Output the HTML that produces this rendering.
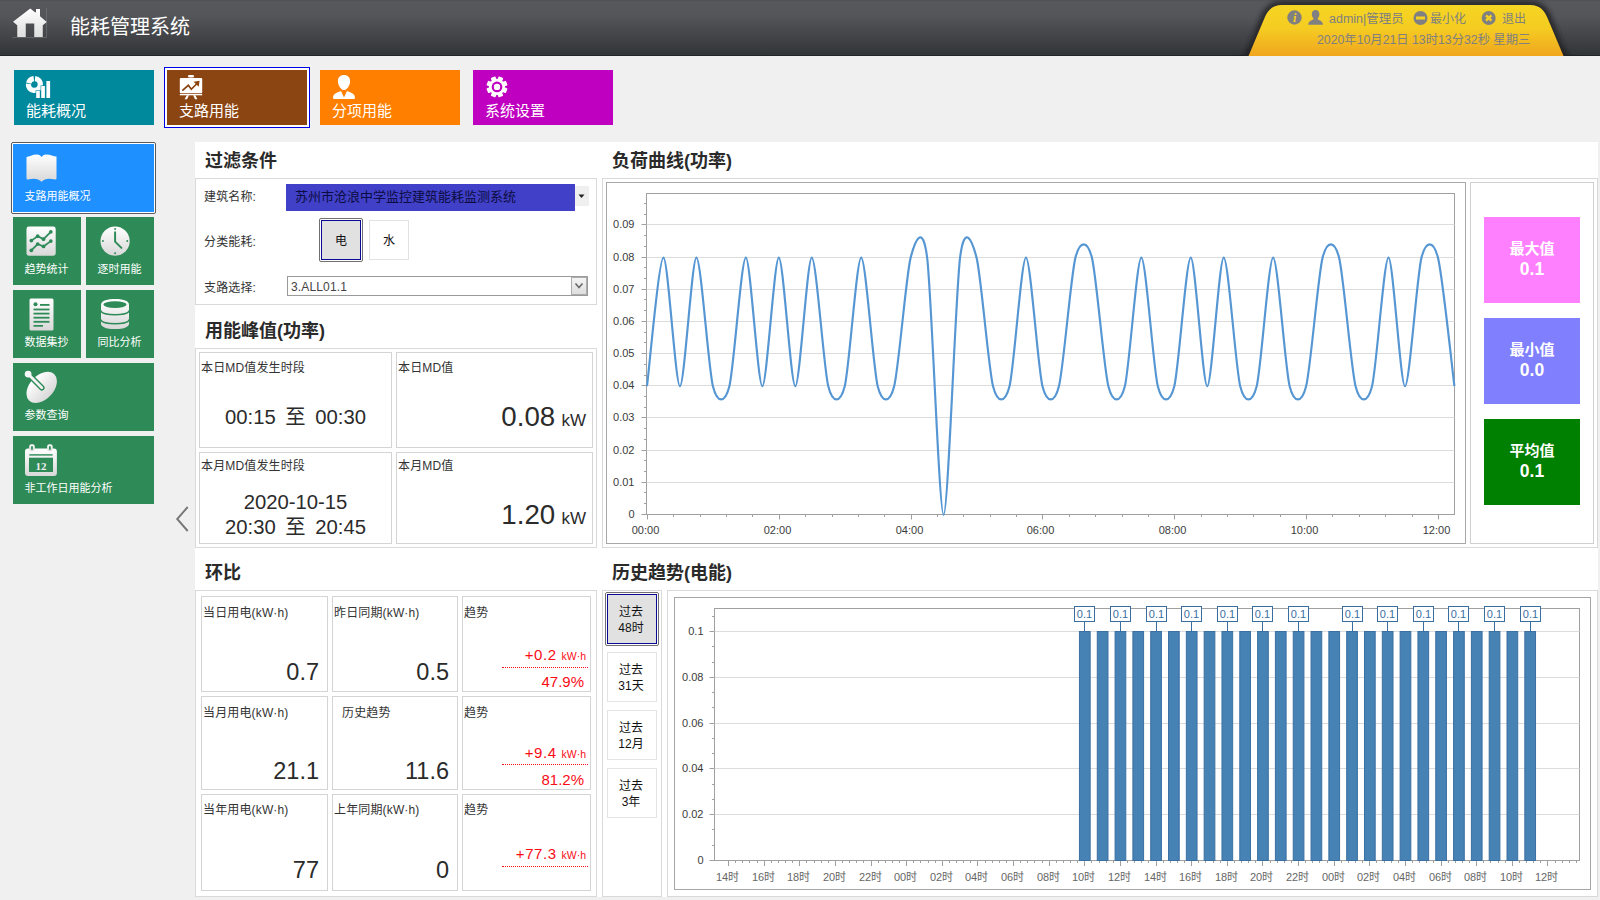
<!DOCTYPE html><html lang="zh-CN"><head><meta charset="utf-8"><title>能耗管理系统</title><style>
*{box-sizing:border-box;margin:0;padding:0}
html,body{width:1600px;height:900px;overflow:hidden;background:#f0f0f0}
body{position:relative;font-family:"Liberation Sans","Noto Sans CJK SC",sans-serif;font-size:12px;color:#222}
.a{position:absolute}
.t{position:absolute;white-space:nowrap;line-height:1}
#hdr{left:0;top:0;width:1600px;height:56px;background:linear-gradient(#505155 0,#57585c 2px,#545559 30%,#45464a 62%,#323537 100%);border-bottom:1px solid #222527}
.tile{position:absolute;color:#fff}
.tile .t{font-size:15px;color:#fff}
.stile .t{font-size:11px;color:#fff}
.h2{position:absolute;font-size:18px;font-weight:700;color:#2a2a2a;white-space:nowrap;line-height:1}
.box{position:absolute;border:1px solid #d9d9d9;background:#fff}
.cell{position:absolute;border:1px solid #d4d4d4;background:#fff}
.lbl{position:absolute;white-space:nowrap;line-height:1;font-size:12px;color:#333;letter-spacing:0.15px}
.big{position:absolute;white-space:nowrap;line-height:1;color:#2b2b2b}
.red{color:#fa0c16}
</style></head><body>
<div id="hdr" class="a"></div>
<svg class="a" style="left:0;top:0" width="60" height="50" viewBox="0 0 60 50">
<defs><linearGradient id="hg" x1="0" y1="0" x2="0" y2="1"><stop offset="0" stop-color="#ffffff"/><stop offset="1" stop-color="#dedede"/></linearGradient></defs>
<path d="M46.500 8 L46.500 37.500 L12.500 37.500" stroke="#7a7b80" stroke-width="1" fill="none" opacity="0.550"/>
<path d="M30.250 8.400 L35.300 12.500 L36 12 L36 9 L40 9 L40 16.200 L46.750 22 L42.750 25.250 L42.750 37 L34.250 37 L34.250 23.500 L25.750 23.500 L25.750 37 L17.250 37 L17.250 25.250 L13 21.750 Z" fill="url(#hg)"/></svg>
<div class="t" style="left:70px;top:17px;font-size:20px;color:#fff;font-weight:400">能耗管理系统</div>
<svg class="a" style="left:1230px;top:0" width="360" height="56" viewBox="1230 0 360 56">
<defs><linearGradient id="yg" x1="0" y1="0" x2="0" y2="1"><stop offset="0" stop-color="#f5d523"/><stop offset="0.45" stop-color="#f5cc22"/><stop offset="1" stop-color="#f0a61e"/></linearGradient>
<linearGradient id="sh" x1="0" y1="0" x2="0" y2="1"><stop offset="0" stop-color="#4a4b4f"/><stop offset="1" stop-color="#2e2f32"/></linearGradient></defs>
<filter id="bl" x="-5%" y="-20%" width="110%" height="140%"><feGaussianBlur stdDeviation="2.200"/></filter>
<path d="M1248.500 58 L1264.500 18 C1267 12 1271 5 1282 5 L1530 5 C1541 5 1545 12 1547.500 18 L1563.500 58 Z" fill="#222326" stroke="#222326" stroke-width="9" stroke-linejoin="round" opacity="0.800" filter="url(#bl)"/>
<path d="M1236 60 Q1246 58 1251 48 L1258 48 L1258 60 Z M1576 60 Q1566 58 1561 48 L1554 48 L1554 60 Z" fill="#222326" opacity="0.700" filter="url(#bl)"/>
<path d="M1248.500 56 L1264.500 18 C1267 12 1271 5 1282 5 L1530 5 C1541 5 1545 12 1547.500 18 L1563.500 56 Z" fill="url(#yg)"/>
<g fill="#808080">
<circle cx="1294.5" cy="17.5" r="7.2"/>
<circle cx="1420.5" cy="18" r="7"/>
<circle cx="1488.7" cy="18" r="7"/>
<path d="M1315.6 10 c2.6 0 3.8 2 3.8 4.2 c0 1.8 -0.8 3.2 -1.6 4 l0 1.4 c2 .8 5 1.8 5.2 5.2 l-14.8 0 c.2 -3.4 3.2 -4.4 5.2 -5.2 l0 -1.4 c-.8 -.8 -1.6 -2.2 -1.6 -4 c0 -2.2 1.2 -4.2 3.8 -4.2z"/>
</g>
<text x="1294.7" y="22" font-size="12" font-weight="700" font-style="italic" font-family="Liberation Serif,serif" fill="#f5d020" text-anchor="middle">i</text>
<rect x="1416" y="16.5" width="9" height="3" fill="#f5d020"/>
<path d="M1486 15.3 l5.4 5.4 M1491.4 15.3 l-5.4 5.4" stroke="#f5d020" stroke-width="2.4"/>
</svg>
<div class="t" style="left:1329px;top:13px;font-size:12.5px;color:#808080">admin|管理员</div>
<div class="t" style="left:1430px;top:13px;font-size:12px;color:#808080">最小化</div>
<div class="t" style="left:1502px;top:13px;font-size:12px;color:#808080">退出</div>
<div class="t" style="left:1317px;top:34px;font-size:12.3px;color:#808080">2020年10月21日 13时13分32秒 星期三</div>
<div class="tile" style="left:14px;top:70px;width:140px;height:55px;background:#00889c"><svg class="a" style="left:0;top:0" width="60" height="34" viewBox="0 0 60 34"><g fill="#fff"><path d="M21.30 5.95 A8.6 8.6 0 1 1 11.85 13.60 L17.12 14.16 A3.3 3.3 0 1 0 20.74 11.22 Z"/><path d="M12.06 12.42 A8.6 8.6 0 0 1 19.50 5.95 L20.06 11.22 A3.3 3.3 0 0 0 17.20 13.70 Z"/></g><g fill="#fff" stroke="#00889c" stroke-width="1.2" paint-order="stroke"><rect x="22.2" y="21" width="3.6" height="7"/><rect x="27.2" y="16" width="3.700" height="12"/><rect x="32.400" y="11" width="3.700" height="17"/></g></svg><div class="t" style="left:12px;top:33px">能耗概况</div></div>
<div class="a" style="left:164px;top:67px;width:146px;height:61px;border:1px solid #0000e6;background:#fff"></div>
<div class="tile" style="left:167px;top:70px;width:140px;height:55px;background:#8b4513"><svg class="a" style="left:0;top:0" width="60" height="34" viewBox="0 0 60 34"><g fill="#fff">
<rect x="21" y="5" width="6" height="2.400" rx="1.200"/><rect x="12.800" y="8" width="22.400" height="15.300" rx="1"/><rect x="12.800" y="24" width="22.400" height="1.300"/>
<path d="M19.800 25.300 L22 25.300 L20 29.200 L17.600 29.200 Z M26.200 25.300 L28.400 25.300 L30.400 29.200 L28 29.200 Z"/></g>
<path d="M15.300 20.700 L21.300 15.300 L24.300 19.300 L30.500 13" stroke="#8b4513" stroke-width="1.700" fill="none"/><path d="M26.600 11.700 L32.600 10.800 L31.700 16.800 Z" fill="#8b4513"/></svg><div class="t" style="left:12px;top:33px">支路用能</div></div>
<div class="tile" style="left:320px;top:70px;width:140px;height:55px;background:#ff8000"><svg class="a" style="left:-4px;top:0" width="60" height="34" viewBox="0 0 60 34"><g fill="#fff">
<path d="M28 5 C31.800 5 34.100 7.500 34.100 11 C34.100 13 33.600 14.200 33.100 15.200 C32.400 17.800 30.200 20 28 20 C25.800 20 23.600 17.800 22.900 15.200 C22.400 14.200 21.900 13 21.900 11 C21.900 7.500 24.200 5 28 5 Z"/>
<path d="M25 21 L28 27.400 L31 21 C34 22.400 39 23.500 39 27.500 Q39 29 37.500 29 L18.500 29 Q17 29 17 27.500 C17 23.500 22 22.400 25 21 Z"/></g></svg><div class="t" style="left:12px;top:33px">分项用能</div></div>
<div class="tile" style="left:473px;top:70px;width:140px;height:55px;background:#c000c0"><svg class="a" style="left:0;top:0" width="60" height="34" viewBox="0 0 60 34"><g transform="translate(24 16.900)"><g fill="#fff"><rect x="-2.500" y="-10.500" width="5" height="6" rx="0.800" transform="rotate(22.5)"/><rect x="-2.500" y="-10.500" width="5" height="6" rx="0.800" transform="rotate(67.5)"/><rect x="-2.500" y="-10.500" width="5" height="6" rx="0.800" transform="rotate(112.5)"/><rect x="-2.500" y="-10.500" width="5" height="6" rx="0.800" transform="rotate(157.5)"/><rect x="-2.500" y="-10.500" width="5" height="6" rx="0.800" transform="rotate(202.5)"/><rect x="-2.500" y="-10.500" width="5" height="6" rx="0.800" transform="rotate(247.5)"/><rect x="-2.500" y="-10.500" width="5" height="6" rx="0.800" transform="rotate(292.5)"/><rect x="-2.500" y="-10.500" width="5" height="6" rx="0.800" transform="rotate(337.5)"/><circle r="8"/></g><circle r="5.300" fill="#c000c0"/><circle r="3.200" fill="#fff"/></g></svg><div class="t" style="left:12px;top:33px">系统设置</div></div>
<div class="a" style="left:11px;top:142px;width:145px;height:72px;border:1px solid #5a5a5a;border-radius:2px;background:#fff"></div>
<div class="tile stile" style="left:13px;top:144px;width:141px;height:68px;background:#1e90ff"><svg class="a" style="left:12.600px;top:9.800px" width="31" height="28.500" viewBox="0 0 31 28.500"><defs><linearGradient id="wg" x1="0" y1="0" x2="0" y2="1"><stop offset="0" stop-color="#ffffff"/><stop offset="1" stop-color="#d8d8d8"/></linearGradient></defs><path d="M0.500 3 C3 2.700 7 0.200 11 0.400 C13 0.500 15 1.700 15.600 3 C16.200 1.700 18 0.500 20 0.400 C24 0.200 28 2.700 30.500 2.500 L30.500 24.200 Q30.500 25.700 29 25.500 C26 24.700 22 24.200 19.500 25.200 C17.500 26 16.200 27 15.600 28 C15 27 13.500 26 11.500 25.200 C9 24.200 5 24.700 2 25.500 Q0.500 25.700 0.500 24.200 Z" fill="url(#wg)"/></svg><div class="t" style="left:11.5px;top:47px">支路用能概况</div></div>
<div class="tile stile" style="left:13px;top:217px;width:68px;height:68px;background:#2e8b57"><svg class="a" style="left:12.900px;top:8.800px" width="30.200" height="30.200" viewBox="0 0 31 31"><rect x="0.500" y="0.500" width="30" height="30" rx="2.500" fill="url(#wg)"/>
<g stroke="#2e8b57" stroke-width="1.800" fill="none"><path d="M5.500 15 L12 10.500 L18 13.500 L25.500 6"/><path d="M5.500 25 L12 18.500 L18 21 L25.500 15.500"/></g>
<g fill="#2e8b57"><circle cx="5.500" cy="15" r="1.900"/><circle cx="12" cy="10.500" r="1.900"/><circle cx="18" cy="13.500" r="1.900"/><circle cx="25.500" cy="6" r="1.900"/><circle cx="5.500" cy="25" r="1.900"/><circle cx="12" cy="18.500" r="1.900"/><circle cx="18" cy="21" r="1.900"/><circle cx="25.500" cy="15.500" r="1.900"/></g></svg><div class="t" style="left:11.5px;top:47px">趋势统计</div></div>
<div class="tile stile" style="left:86px;top:217px;width:68px;height:68px;background:#2e8b57"><svg class="a" style="left:13.600px;top:8.700px" width="30.200" height="30.200" viewBox="0 0 31 31"><circle cx="15.500" cy="15.500" r="15" fill="url(#wg)"/>
<path d="M15.500 6.500 L15.500 16 L22 22.500" stroke="#2e8b57" stroke-width="2" fill="none" stroke-linecap="round"/>
<g fill="#2e8b57"><circle cx="15.500" cy="3" r="1"/><circle cx="15.500" cy="28" r="1"/><circle cx="3" cy="15.500" r="1"/><circle cx="28" cy="15.500" r="1"/></g></svg><div class="t" style="left:11.5px;top:47px">逐时用能</div></div>
<div class="tile stile" style="left:13px;top:290px;width:68px;height:68px;background:#2e8b57"><svg class="a" style="left:16.400px;top:7.600px" width="25" height="33" viewBox="0 0 25 33"><path d="M2 0.500 L23 0.500 Q24.500 0.500 24.500 2 L24.500 31 Q24.500 32.500 23 32.500 L2 32.500 Q0.500 32.500 0.500 31 L0.500 2 Q0.500 0.500 2 0.500Z" fill="url(#wg)"/>
<g fill="#2e8b57"><circle cx="6.500" cy="6.300" r="2"/><rect x="11" y="6" width="9.500" height="1.800"/><rect x="4.500" y="10.600" width="16" height="1.800"/><rect x="4.500" y="14.700" width="16" height="1.800"/><rect x="4.500" y="18.800" width="16" height="1.800"/><rect x="4.500" y="22.900" width="16" height="1.800"/><rect x="4.500" y="27" width="9.500" height="1.700"/></g></svg><div class="t" style="left:11.5px;top:47px">数据集抄</div></div>
<div class="tile stile" style="left:86px;top:290px;width:68px;height:68px;background:#2e8b57"><svg class="a" style="left:14.800px;top:8.800px" width="28" height="30.500" viewBox="0 0 28 30.500"><g fill="url(#wg)">
<path d="M0 5.500 C0 -1.700 28 -1.700 28 5.500 L28 24.700 C28 32 0 32 0 24.700 Z"/></g>
<g stroke="#2e8b57" stroke-width="1.500" fill="none"><path d="M0 11.500 C0 17.300 28 17.300 28 11.500"/><path d="M0 20.500 C0 26.300 28 26.300 28 20.500"/></g>
<ellipse cx="14" cy="5.600" rx="11.600" ry="3.400" fill="#2e8b57"/></svg><div class="t" style="left:11.5px;top:47px">同比分析</div></div>
<div class="tile stile" style="left:13px;top:363px;width:141px;height:68px;background:#2e8b57"><svg class="a" style="left:11px;top:7px" width="36" height="36" viewBox="0 0 36 36">
<ellipse cx="17.700" cy="17.400" rx="18.200" ry="12" transform="rotate(-47 17.700 17.400)" fill="url(#wg)"/>
<path d="M4.100 4.100 L17.800 17.800" stroke="#2e8b57" stroke-width="5.600" stroke-linecap="round"/>
<path d="M4.100 4.100 L17.800 17.800" stroke="#f3f3f3" stroke-width="2.800" stroke-linecap="round"/>
<circle cx="4.100" cy="4.100" r="3.400" fill="#f8f8f8"/></svg><div class="t" style="left:11.5px;top:47px">参数查询</div></div>
<div class="tile stile" style="left:13px;top:436px;width:141px;height:68px;background:#2e8b57"><svg class="a" style="left:0;top:0" width="60" height="50" viewBox="0 0 60 50"><g fill="url(#wg)">
<rect x="12" y="12.400" width="31.900" height="27.600" rx="3"/><rect x="16.200" y="8.200" width="5.600" height="7" rx="2.400"/><rect x="34.100" y="8.200" width="5.600" height="7" rx="2.400"/></g>
<g fill="#2e8b57"><rect x="16.300" y="18.200" width="23.300" height="1.400"/><rect x="16" y="21.700" width="24" height="14.300"/><rect x="18.100" y="10" width="1.800" height="3.800" rx="0.900"/><rect x="36" y="10" width="1.800" height="3.800" rx="0.900"/></g>
<text x="28" y="33.600" font-size="11" font-weight="700" font-family="Liberation Serif,serif" fill="#eee" text-anchor="middle">12</text></svg><div class="t" style="left:11.5px;top:47px">非工作日用能分析</div></div>
<svg class="a" style="left:174px;top:505.300px" width="16" height="28" viewBox="0 0 16 28"><path d="M13.700 2 L3.200 14 L13.700 26" stroke="#777" stroke-width="1.900" fill="none"/></svg>
<div class="a" style="left:195px;top:142px;width:1403px;height:755px;background:#fff"></div>
<div class="h2" style="left:205px;top:151.6px">过滤条件</div>
<div class="h2" style="left:205px;top:321.6px">用能峰值(功率)</div>
<div class="h2" style="left:205px;top:563.6px">环比</div>
<div class="h2" style="left:612px;top:151.6px">负荷曲线(功率)</div>
<div class="h2" style="left:612px;top:563.6px">历史趋势(电能)</div>
<div class="box" style="left:195px;top:178px;width:402px;height:127px"></div>
<div class="lbl" style="left:204px;top:191px">建筑名称:</div>
<div class="lbl" style="left:204px;top:236px">分类能耗:</div>
<div class="lbl" style="left:204px;top:282px">支路选择:</div>
<div class="a" style="left:286px;top:184px;width:289px;height:27px;background:#4040c8"></div>
<div class="lbl" style="left:295px;top:190px;color:#0c0c40;font-size:13px;letter-spacing:0">苏州市沧浪中学监控建筑能耗监测系统</div>
<div class="a" style="left:575px;top:186px;width:14px;height:20px;background:#efefef"></div>
<svg class="a" style="left:578px;top:194px" width="8" height="5"><path d="M0.500 0.500 L6.500 0.500 L3.500 4 Z" fill="#222"/></svg>
<div class="a" style="left:319px;top:218px;width:44px;height:44px;border:1px solid #707070;border-radius:2px;background:#fff"></div>
<div class="a" style="left:321px;top:220px;width:40px;height:40px;border:1px solid #0a0a96;background:#e1e1e1"></div>
<div class="lbl" style="left:335px;top:235px;color:#111">电</div>
<div class="a" style="left:369px;top:220px;width:40px;height:40px;border:1px solid #e2e2e2;background:#fff"></div>
<div class="lbl" style="left:383px;top:235px;color:#111">水</div>
<div class="a" style="left:287px;top:276px;width:301px;height:20px;border:1px solid #9a9a9a;background:#fff"></div>
<div class="lbl" style="left:291px;top:281px;color:#444">3.ALL01.1</div>
<div class="a" style="left:571px;top:277px;width:16px;height:18px;border:1px solid #adadad;background:linear-gradient(#f4f4f4,#dedede)"></div>
<svg class="a" style="left:574px;top:282px" width="10" height="8"><path d="M1.500 1.500 L5 5.500 L8.500 1.500" stroke="#6a6a6a" stroke-width="1.600" fill="none"/></svg>
<div class="box" style="left:195px;top:348px;width:402px;height:200px"></div>
<div class="cell" style="left:199px;top:352px;width:193px;height:96px"></div>
<div class="cell" style="left:396px;top:352px;width:197px;height:96px"></div>
<div class="cell" style="left:199px;top:452px;width:193px;height:92px"></div>
<div class="cell" style="left:396px;top:452px;width:197px;height:92px"></div>
<div class="lbl" style="left:201px;top:362px">本日MD值发生时段</div>
<div class="lbl" style="left:398px;top:362px">本日MD值</div>
<div class="lbl" style="left:201px;top:460px">本月MD值发生时段</div>
<div class="lbl" style="left:398px;top:460px">本月MD值</div>
<div class="big" style="left:199px;width:193px;text-align:center;top:407px;font-size:20.3px;word-spacing:4px">00:15 至 00:30</div>
<div class="big" style="left:199px;width:193px;text-align:center;top:492px;font-size:20.3px">2020-10-15</div>
<div class="big" style="left:199px;width:193px;text-align:center;top:517px;font-size:20.3px;word-spacing:4px">20:30 至 20:45</div>
<div class="big" style="right:1014px;top:403px;font-size:27.700px">0.08<span style="font-size:17px;margin-left:1.5px"> kW</span></div>
<div class="big" style="right:1014px;top:501px;font-size:27.700px">1.20<span style="font-size:17px;margin-left:1.5px"> kW</span></div>
<div class="box" style="left:195px;top:590px;width:402px;height:307px"></div>
<div class="cell" style="left:201px;top:596px;width:127px;height:96px"></div>
<div class="lbl" style="left:203px;top:607px">当日用电(kW·h)</div>
<div class="big" style="right:1281px;top:661px;font-size:23.5px">0.7</div>
<div class="cell" style="left:332px;top:596px;width:126px;height:96px"></div>
<div class="lbl" style="left:334px;top:607px">昨日同期(kW·h)</div>
<div class="big" style="right:1151px;top:661px;font-size:23.5px">0.5</div>
<div class="cell" style="left:462px;top:596px;width:129px;height:96px"></div>
<div class="lbl" style="left:464px;top:607px">趋势</div>
<div class="big red" style="right:1014px;top:647px;font-size:15px;letter-spacing:0.6px">+0.2 <span style="font-size:10.5px;letter-spacing:0">kW·h</span></div>
<div class="a" style="left:502px;top:667px;width:86px;border-top:1px dotted #fa0c16"></div>
<div class="big red" style="right:1016px;top:674px;font-size:15px">47.9%</div>
<div class="cell" style="left:201px;top:696px;width:127px;height:94px"></div>
<div class="lbl" style="left:203px;top:707px">当月用电(kW·h)</div>
<div class="big" style="right:1281px;top:760px;font-size:23.5px">21.1</div>
<div class="cell" style="left:332px;top:696px;width:126px;height:94px"></div>
<div class="lbl" style="left:342px;top:707px">历史趋势</div>
<div class="big" style="right:1151px;top:760px;font-size:23.5px">11.6</div>
<div class="cell" style="left:462px;top:696px;width:129px;height:94px"></div>
<div class="lbl" style="left:464px;top:707px">趋势</div>
<div class="big red" style="right:1014px;top:745px;font-size:15px;letter-spacing:0.6px">+9.4 <span style="font-size:10.5px;letter-spacing:0">kW·h</span></div>
<div class="a" style="left:502px;top:764px;width:86px;border-top:1px dotted #fa0c16"></div>
<div class="big red" style="right:1016px;top:772px;font-size:15px">81.2%</div>
<div class="cell" style="left:201px;top:794px;width:127px;height:97px"></div>
<div class="lbl" style="left:203px;top:804px">当年用电(kW·h)</div>
<div class="big" style="right:1281px;top:859px;font-size:23.5px">77</div>
<div class="cell" style="left:332px;top:794px;width:126px;height:97px"></div>
<div class="lbl" style="left:334px;top:804px">上年同期(kW·h)</div>
<div class="big" style="right:1151px;top:859px;font-size:23.5px">0</div>
<div class="cell" style="left:462px;top:794px;width:129px;height:97px"></div>
<div class="lbl" style="left:464px;top:804px">趋势</div>
<div class="big red" style="right:1014px;top:846px;font-size:15px;letter-spacing:0.6px">+77.3 <span style="font-size:10.5px;letter-spacing:0">kW·h</span></div>
<div class="a" style="left:502px;top:866px;width:86px;border-top:1px dotted #fa0c16"></div>
<div class="box" style="left:602px;top:178px;width:996px;height:370px"></div>
<div class="a" style="left:606px;top:182px;width:860px;height:362px;border:1px solid #a8a8a8;background:#fff"></div>
<div class="a" style="left:1470px;top:182px;width:124px;height:362px;border:1px solid #d0d0d0;background:#fff"></div>
<div class="a" style="left:1484px;top:217px;width:96px;height:86px;background:#ff80ff"></div>
<div class="t" style="left:1484px;width:96px;text-align:center;top:241px;font-size:15px;font-weight:700;color:#fff">最大值</div>
<div class="t" style="left:1484px;width:96px;text-align:center;top:261px;font-size:17.5px;font-weight:700;color:#fff">0.1</div>
<div class="a" style="left:1484px;top:318px;width:96px;height:86px;background:#8080ff"></div>
<div class="t" style="left:1484px;width:96px;text-align:center;top:342px;font-size:15px;font-weight:700;color:#fff">最小值</div>
<div class="t" style="left:1484px;width:96px;text-align:center;top:362px;font-size:17.5px;font-weight:700;color:#fff">0.0</div>
<div class="a" style="left:1484px;top:419px;width:96px;height:86px;background:#008000"></div>
<div class="t" style="left:1484px;width:96px;text-align:center;top:443px;font-size:15px;font-weight:700;color:#fff">平均值</div>
<div class="t" style="left:1484px;width:96px;text-align:center;top:463px;font-size:17.5px;font-weight:700;color:#fff">0.1</div>
<svg class="a" style="left:600px;top:178px" width="870" height="372" viewBox="600 178 870 372" font-family="Liberation Sans,sans-serif" font-size="11" fill="#3c3c3c"><rect x="646.5" y="193.5" width="808.0" height="321.0" fill="#fff" stroke="#a0a0a0" stroke-width="1"/><path d="M646.5 482.5 L1454.5 482.5" stroke="#dcdcdc" stroke-width="1"/><path d="M646.5 450.5 L1454.5 450.5" stroke="#dcdcdc" stroke-width="1"/><path d="M646.5 417.5 L1454.5 417.5" stroke="#dcdcdc" stroke-width="1"/><path d="M646.5 385.5 L1454.5 385.5" stroke="#dcdcdc" stroke-width="1"/><path d="M646.5 353.5 L1454.5 353.5" stroke="#dcdcdc" stroke-width="1"/><path d="M646.5 321.5 L1454.5 321.5" stroke="#dcdcdc" stroke-width="1"/><path d="M646.5 289.5 L1454.5 289.5" stroke="#dcdcdc" stroke-width="1"/><path d="M646.5 257.5 L1454.5 257.5" stroke="#dcdcdc" stroke-width="1"/><path d="M646.5 224.5 L1454.5 224.5" stroke="#dcdcdc" stroke-width="1"/><path d="M641.5 514.5 L646.5 514.5" stroke="#a0a0a0"/><text x="634.5" y="518.0" text-anchor="end">0</text><path d="M644.0 503.5 L646.5 503.5" stroke="#a0a0a0"/><path d="M644.0 492.5 L646.5 492.5" stroke="#a0a0a0"/><path d="M641.5 482.5 L646.5 482.5" stroke="#a0a0a0"/><text x="634.5" y="486.0" text-anchor="end">0.01</text><path d="M644.0 471.5 L646.5 471.5" stroke="#a0a0a0"/><path d="M644.0 460.5 L646.5 460.5" stroke="#a0a0a0"/><path d="M641.5 450.5 L646.5 450.5" stroke="#a0a0a0"/><text x="634.5" y="454.0" text-anchor="end">0.02</text><path d="M644.0 439.5 L646.5 439.5" stroke="#a0a0a0"/><path d="M644.0 428.5 L646.5 428.5" stroke="#a0a0a0"/><path d="M641.5 417.5 L646.5 417.5" stroke="#a0a0a0"/><text x="634.5" y="421.0" text-anchor="end">0.03</text><path d="M644.0 407.5 L646.5 407.5" stroke="#a0a0a0"/><path d="M644.0 396.5 L646.5 396.5" stroke="#a0a0a0"/><path d="M641.5 385.5 L646.5 385.5" stroke="#a0a0a0"/><text x="634.5" y="389.0" text-anchor="end">0.04</text><path d="M644.0 375.5 L646.5 375.5" stroke="#a0a0a0"/><path d="M644.0 364.5 L646.5 364.5" stroke="#a0a0a0"/><path d="M641.5 353.5 L646.5 353.5" stroke="#a0a0a0"/><text x="634.5" y="357.0" text-anchor="end">0.05</text><path d="M644.0 342.5 L646.5 342.5" stroke="#a0a0a0"/><path d="M644.0 332.5 L646.5 332.5" stroke="#a0a0a0"/><path d="M641.5 321.5 L646.5 321.5" stroke="#a0a0a0"/><text x="634.5" y="325.0" text-anchor="end">0.06</text><path d="M644.0 310.5 L646.5 310.5" stroke="#a0a0a0"/><path d="M644.0 299.5 L646.5 299.5" stroke="#a0a0a0"/><path d="M641.5 289.5 L646.5 289.5" stroke="#a0a0a0"/><text x="634.5" y="293.0" text-anchor="end">0.07</text><path d="M644.0 278.5 L646.5 278.5" stroke="#a0a0a0"/><path d="M644.0 267.5 L646.5 267.5" stroke="#a0a0a0"/><path d="M641.5 257.5 L646.5 257.5" stroke="#a0a0a0"/><text x="634.5" y="261.0" text-anchor="end">0.08</text><path d="M644.0 246.5 L646.5 246.5" stroke="#a0a0a0"/><path d="M644.0 235.5 L646.5 235.5" stroke="#a0a0a0"/><path d="M641.5 224.5 L646.5 224.5" stroke="#a0a0a0"/><text x="634.5" y="228.0" text-anchor="end">0.09</text><path d="M644.0 214.5 L646.5 214.5" stroke="#a0a0a0"/><path d="M644.0 203.5 L646.5 203.5" stroke="#a0a0a0"/><path d="M647.5 514.5 L647.5 519.5" stroke="#a0a0a0"/><text x="645.5" y="533.5" text-anchor="middle">00:00</text><path d="M673.5 514.5 L673.5 517.0" stroke="#a0a0a0"/><path d="M700.5 514.5 L700.5 517.0" stroke="#a0a0a0"/><path d="M726.5 514.5 L726.5 517.0" stroke="#a0a0a0"/><path d="M752.5 514.5 L752.5 517.0" stroke="#a0a0a0"/><path d="M779.5 514.5 L779.5 519.5" stroke="#a0a0a0"/><text x="777.5" y="533.5" text-anchor="middle">02:00</text><path d="M805.5 514.5 L805.5 517.0" stroke="#a0a0a0"/><path d="M832.5 514.5 L832.5 517.0" stroke="#a0a0a0"/><path d="M858.5 514.5 L858.5 517.0" stroke="#a0a0a0"/><path d="M884.5 514.5 L884.5 517.0" stroke="#a0a0a0"/><path d="M911.5 514.5 L911.5 519.5" stroke="#a0a0a0"/><text x="909.5" y="533.5" text-anchor="middle">04:00</text><path d="M937.5 514.5 L937.5 517.0" stroke="#a0a0a0"/><path d="M963.5 514.5 L963.5 517.0" stroke="#a0a0a0"/><path d="M990.5 514.5 L990.5 517.0" stroke="#a0a0a0"/><path d="M1016.5 514.5 L1016.5 517.0" stroke="#a0a0a0"/><path d="M1042.5 514.5 L1042.5 519.5" stroke="#a0a0a0"/><text x="1040.5" y="533.5" text-anchor="middle">06:00</text><path d="M1069.5 514.5 L1069.5 517.0" stroke="#a0a0a0"/><path d="M1095.5 514.5 L1095.5 517.0" stroke="#a0a0a0"/><path d="M1122.5 514.5 L1122.5 517.0" stroke="#a0a0a0"/><path d="M1148.5 514.5 L1148.5 517.0" stroke="#a0a0a0"/><path d="M1174.5 514.5 L1174.5 519.5" stroke="#a0a0a0"/><text x="1172.5" y="533.5" text-anchor="middle">08:00</text><path d="M1201.5 514.5 L1201.5 517.0" stroke="#a0a0a0"/><path d="M1227.5 514.5 L1227.5 517.0" stroke="#a0a0a0"/><path d="M1253.5 514.5 L1253.5 517.0" stroke="#a0a0a0"/><path d="M1280.5 514.5 L1280.5 517.0" stroke="#a0a0a0"/><path d="M1306.5 514.5 L1306.5 519.5" stroke="#a0a0a0"/><text x="1304.5" y="533.5" text-anchor="middle">10:00</text><path d="M1332.5 514.5 L1332.5 517.0" stroke="#a0a0a0"/><path d="M1359.5 514.5 L1359.5 517.0" stroke="#a0a0a0"/><path d="M1385.5 514.5 L1385.5 517.0" stroke="#a0a0a0"/><path d="M1412.5 514.5 L1412.5 517.0" stroke="#a0a0a0"/><path d="M1438.5 514.5 L1438.5 519.5" stroke="#a0a0a0"/><text x="1436.5" y="533.5" text-anchor="middle">12:00</text><path d="M647.00 386.22 C649.25 368.64 658.97 257.62 663.48 257.62 C667.98 257.62 675.45 386.22 679.96 386.22 C684.46 386.22 691.93 257.62 696.43 257.62 C700.94 257.62 708.41 368.64 712.91 386.22 C717.42 403.80 724.89 403.80 729.39 386.22 C733.89 368.64 741.36 257.62 745.87 257.62 C750.37 257.62 757.84 386.22 762.35 386.22 C766.85 386.22 774.32 257.62 778.82 257.62 C783.33 257.62 790.80 386.22 795.30 386.22 C799.81 386.22 807.28 257.62 811.78 257.62 C816.28 257.62 823.75 368.64 828.26 386.22 C832.76 403.80 840.23 403.80 844.74 386.22 C849.24 368.64 856.71 257.62 861.21 257.62 C865.72 257.62 873.19 368.64 877.69 386.22 C882.20 403.80 889.67 403.80 894.17 386.22 C898.67 368.64 906.14 275.20 910.65 257.62 C915.15 240.04 922.62 222.47 927.13 257.62 C931.63 292.77 939.10 514.82 943.60 514.82 C948.11 514.82 955.58 292.77 960.08 257.62 C964.59 222.47 972.06 240.04 976.56 257.62 C981.06 275.20 988.53 368.64 993.04 386.22 C997.54 403.80 1005.01 403.80 1009.52 386.22 C1014.02 368.64 1021.49 257.62 1025.99 257.62 C1030.50 257.62 1037.97 368.64 1042.47 386.22 C1046.98 403.80 1054.45 403.80 1058.95 386.22 C1063.45 368.64 1070.92 275.20 1075.43 257.62 C1079.93 240.04 1087.40 240.04 1091.91 257.62 C1096.41 275.20 1103.88 368.64 1108.38 386.22 C1112.89 403.80 1120.36 403.80 1124.86 386.22 C1129.37 368.64 1136.84 257.62 1141.34 257.62 C1145.84 257.62 1153.31 368.64 1157.82 386.22 C1162.32 403.80 1169.79 403.80 1174.30 386.22 C1178.80 368.64 1186.27 257.62 1190.77 257.62 C1195.28 257.62 1202.75 386.22 1207.25 386.22 C1211.76 386.22 1219.23 257.62 1223.73 257.62 C1228.23 257.62 1235.70 368.64 1240.21 386.22 C1244.71 403.80 1252.18 403.80 1256.69 386.22 C1261.19 368.64 1268.66 257.62 1273.16 257.62 C1277.67 257.62 1285.14 368.64 1289.64 386.22 C1294.15 403.80 1301.62 403.80 1306.12 386.22 C1310.62 368.64 1318.09 275.20 1322.60 257.62 C1327.10 240.04 1334.57 240.04 1339.08 257.62 C1343.58 275.20 1351.05 368.64 1355.55 386.22 C1360.06 403.80 1367.53 403.80 1372.03 386.22 C1376.54 368.64 1384.01 257.62 1388.51 257.62 C1393.01 257.62 1400.48 386.22 1404.99 386.22 C1409.49 386.22 1416.96 275.20 1421.47 257.62 C1425.97 240.04 1433.44 240.04 1437.94 257.62 C1442.45 275.20 1452.17 368.64 1454.42 386.22" stroke="#5596d3" stroke-width="2.150" fill="none" stroke-linejoin="round"/></svg>
<div class="box" style="left:602px;top:590px;width:60px;height:307px"></div>
<div class="box" style="left:667px;top:590px;width:931px;height:307px"></div>
<div class="a" style="left:674px;top:597px;width:917px;height:293px;border:1px solid #a6a6a6;background:#fff"></div>
<div class="a" style="left:605px;top:592px;width:54px;height:54px;border:1px solid #707070;border-radius:2px;background:#fff"></div>
<div class="a" style="left:607px;top:594px;width:50px;height:50px;border:1px solid #0a0a96;background:#e1e1e1"></div>
<div class="t" style="left:606px;width:50px;text-align:center;top:606px;font-size:12px;color:#111">过去</div>
<div class="t" style="left:606px;width:50px;text-align:center;top:622px;font-size:12px;color:#111">48时</div>
<div class="a" style="left:607px;top:652px;width:50px;height:50px;border:1px solid #e4e4e4;background:#fff"></div>
<div class="t" style="left:606px;width:50px;text-align:center;top:664px;font-size:12px;color:#111">过去</div>
<div class="t" style="left:606px;width:50px;text-align:center;top:680px;font-size:12px;color:#111">31天</div>
<div class="a" style="left:607px;top:710px;width:50px;height:50px;border:1px solid #e4e4e4;background:#fff"></div>
<div class="t" style="left:606px;width:50px;text-align:center;top:722px;font-size:12px;color:#111">过去</div>
<div class="t" style="left:606px;width:50px;text-align:center;top:738px;font-size:12px;color:#111">12月</div>
<div class="a" style="left:607px;top:768px;width:50px;height:50px;border:1px solid #e4e4e4;background:#fff"></div>
<div class="t" style="left:606px;width:50px;text-align:center;top:780px;font-size:12px;color:#111">过去</div>
<div class="t" style="left:606px;width:50px;text-align:center;top:796px;font-size:12px;color:#111">3年</div>
<svg class="a" style="left:670px;top:594px" width="926" height="300" viewBox="670 594 926 300" font-family="Liberation Sans,Noto Sans CJK SC,sans-serif" font-size="11" fill="#3c3c3c"><rect x="714.5" y="608.5" width="865.0" height="252.0" fill="#fff" stroke="#a0a0a0"/><path d="M709.5 860.5 L714.5 860.5" stroke="#a0a0a0"/><text x="703.5" y="864.0" text-anchor="end">0</text><path d="M712.0 845.5 L714.5 845.5" stroke="#a0a0a0"/><path d="M712.0 829.5 L714.5 829.5" stroke="#a0a0a0"/><path d="M714.5 814.5 L1579.5 814.5" stroke="#dcdcdc"/><path d="M709.5 814.5 L714.5 814.5" stroke="#a0a0a0"/><text x="703.5" y="818.0" text-anchor="end">0.02</text><path d="M712.0 799.5 L714.5 799.5" stroke="#a0a0a0"/><path d="M712.0 784.5 L714.5 784.5" stroke="#a0a0a0"/><path d="M714.5 768.5 L1579.5 768.5" stroke="#dcdcdc"/><path d="M709.5 768.5 L714.5 768.5" stroke="#a0a0a0"/><text x="703.5" y="772.0" text-anchor="end">0.04</text><path d="M712.0 753.5 L714.5 753.5" stroke="#a0a0a0"/><path d="M712.0 738.5 L714.5 738.5" stroke="#a0a0a0"/><path d="M714.5 723.5 L1579.5 723.5" stroke="#dcdcdc"/><path d="M709.5 723.5 L714.5 723.5" stroke="#a0a0a0"/><text x="703.5" y="727.0" text-anchor="end">0.06</text><path d="M712.0 707.5 L714.5 707.5" stroke="#a0a0a0"/><path d="M712.0 692.5 L714.5 692.5" stroke="#a0a0a0"/><path d="M714.5 677.5 L1579.5 677.5" stroke="#dcdcdc"/><path d="M709.5 677.5 L714.5 677.5" stroke="#a0a0a0"/><text x="703.5" y="681.0" text-anchor="end">0.08</text><path d="M712.0 662.5 L714.5 662.5" stroke="#a0a0a0"/><path d="M712.0 646.5 L714.5 646.5" stroke="#a0a0a0"/><path d="M714.5 631.5 L1579.5 631.5" stroke="#dcdcdc"/><path d="M709.5 631.5 L714.5 631.5" stroke="#a0a0a0"/><text x="703.5" y="635.0" text-anchor="end">0.1</text><path d="M712.0 616.5 L714.5 616.5" stroke="#a0a0a0"/><path d="M728.5 860.5 L728.5 866.0" stroke="#a0a0a0"/><text x="727.5" y="880.5" text-anchor="middle" fill="#666">14时</text><path d="M735.5 860.5 L735.5 863.0" stroke="#a0a0a0"/><path d="M742.5 860.5 L742.5 863.0" stroke="#a0a0a0"/><path d="M749.5 860.5 L749.5 863.0" stroke="#a0a0a0"/><path d="M757.5 860.5 L757.5 863.0" stroke="#a0a0a0"/><path d="M764.5 860.5 L764.5 866.0" stroke="#a0a0a0"/><text x="763.5" y="880.5" text-anchor="middle" fill="#666">16时</text><path d="M771.5 860.5 L771.5 863.0" stroke="#a0a0a0"/><path d="M778.5 860.5 L778.5 863.0" stroke="#a0a0a0"/><path d="M785.5 860.5 L785.5 863.0" stroke="#a0a0a0"/><path d="M792.5 860.5 L792.5 863.0" stroke="#a0a0a0"/><path d="M799.5 860.5 L799.5 866.0" stroke="#a0a0a0"/><text x="798.5" y="880.5" text-anchor="middle" fill="#666">18时</text><path d="M806.5 860.5 L806.5 863.0" stroke="#a0a0a0"/><path d="M814.5 860.5 L814.5 863.0" stroke="#a0a0a0"/><path d="M821.5 860.5 L821.5 863.0" stroke="#a0a0a0"/><path d="M828.5 860.5 L828.5 863.0" stroke="#a0a0a0"/><path d="M835.5 860.5 L835.5 866.0" stroke="#a0a0a0"/><text x="834.5" y="880.5" text-anchor="middle" fill="#666">20时</text><path d="M842.5 860.5 L842.5 863.0" stroke="#a0a0a0"/><path d="M849.5 860.5 L849.5 863.0" stroke="#a0a0a0"/><path d="M856.5 860.5 L856.5 863.0" stroke="#a0a0a0"/><path d="M863.5 860.5 L863.5 863.0" stroke="#a0a0a0"/><path d="M871.5 860.5 L871.5 866.0" stroke="#a0a0a0"/><text x="870.5" y="880.5" text-anchor="middle" fill="#666">22时</text><path d="M878.5 860.5 L878.5 863.0" stroke="#a0a0a0"/><path d="M885.5 860.5 L885.5 863.0" stroke="#a0a0a0"/><path d="M892.5 860.5 L892.5 863.0" stroke="#a0a0a0"/><path d="M899.5 860.5 L899.5 863.0" stroke="#a0a0a0"/><path d="M906.5 860.5 L906.5 866.0" stroke="#a0a0a0"/><text x="905.5" y="880.5" text-anchor="middle" fill="#666">00时</text><path d="M913.5 860.5 L913.5 863.0" stroke="#a0a0a0"/><path d="M920.5 860.5 L920.5 863.0" stroke="#a0a0a0"/><path d="M928.5 860.5 L928.5 863.0" stroke="#a0a0a0"/><path d="M935.5 860.5 L935.5 863.0" stroke="#a0a0a0"/><path d="M942.5 860.5 L942.5 866.0" stroke="#a0a0a0"/><text x="941.5" y="880.5" text-anchor="middle" fill="#666">02时</text><path d="M949.5 860.5 L949.5 863.0" stroke="#a0a0a0"/><path d="M956.5 860.5 L956.5 863.0" stroke="#a0a0a0"/><path d="M963.5 860.5 L963.5 863.0" stroke="#a0a0a0"/><path d="M970.5 860.5 L970.5 863.0" stroke="#a0a0a0"/><path d="M977.5 860.5 L977.5 866.0" stroke="#a0a0a0"/><text x="976.5" y="880.5" text-anchor="middle" fill="#666">04时</text><path d="M985.5 860.5 L985.5 863.0" stroke="#a0a0a0"/><path d="M992.5 860.5 L992.5 863.0" stroke="#a0a0a0"/><path d="M999.5 860.5 L999.5 863.0" stroke="#a0a0a0"/><path d="M1006.5 860.5 L1006.5 863.0" stroke="#a0a0a0"/><path d="M1013.5 860.5 L1013.5 866.0" stroke="#a0a0a0"/><text x="1012.5" y="880.5" text-anchor="middle" fill="#666">06时</text><path d="M1020.5 860.5 L1020.5 863.0" stroke="#a0a0a0"/><path d="M1027.5 860.5 L1027.5 863.0" stroke="#a0a0a0"/><path d="M1034.5 860.5 L1034.5 863.0" stroke="#a0a0a0"/><path d="M1042.5 860.5 L1042.5 863.0" stroke="#a0a0a0"/><path d="M1049.5 860.5 L1049.5 866.0" stroke="#a0a0a0"/><text x="1048.5" y="880.5" text-anchor="middle" fill="#666">08时</text><path d="M1056.5 860.5 L1056.5 863.0" stroke="#a0a0a0"/><path d="M1063.5 860.5 L1063.5 863.0" stroke="#a0a0a0"/><path d="M1070.5 860.5 L1070.5 863.0" stroke="#a0a0a0"/><path d="M1077.5 860.5 L1077.5 863.0" stroke="#a0a0a0"/><path d="M1084.5 860.5 L1084.5 866.0" stroke="#a0a0a0"/><text x="1083.5" y="880.5" text-anchor="middle" fill="#666">10时</text><path d="M1091.5 860.5 L1091.5 863.0" stroke="#a0a0a0"/><path d="M1099.5 860.5 L1099.5 863.0" stroke="#a0a0a0"/><path d="M1106.5 860.5 L1106.5 863.0" stroke="#a0a0a0"/><path d="M1113.5 860.5 L1113.5 863.0" stroke="#a0a0a0"/><path d="M1120.5 860.5 L1120.5 866.0" stroke="#a0a0a0"/><text x="1119.5" y="880.5" text-anchor="middle" fill="#666">12时</text><path d="M1127.5 860.5 L1127.5 863.0" stroke="#a0a0a0"/><path d="M1134.5 860.5 L1134.5 863.0" stroke="#a0a0a0"/><path d="M1141.5 860.5 L1141.5 863.0" stroke="#a0a0a0"/><path d="M1148.5 860.5 L1148.5 863.0" stroke="#a0a0a0"/><path d="M1156.5 860.5 L1156.5 866.0" stroke="#a0a0a0"/><text x="1155.5" y="880.5" text-anchor="middle" fill="#666">14时</text><path d="M1163.5 860.5 L1163.5 863.0" stroke="#a0a0a0"/><path d="M1170.5 860.5 L1170.5 863.0" stroke="#a0a0a0"/><path d="M1177.5 860.5 L1177.5 863.0" stroke="#a0a0a0"/><path d="M1184.5 860.5 L1184.5 863.0" stroke="#a0a0a0"/><path d="M1191.5 860.5 L1191.5 866.0" stroke="#a0a0a0"/><text x="1190.5" y="880.5" text-anchor="middle" fill="#666">16时</text><path d="M1198.5 860.5 L1198.5 863.0" stroke="#a0a0a0"/><path d="M1205.5 860.5 L1205.5 863.0" stroke="#a0a0a0"/><path d="M1213.5 860.5 L1213.5 863.0" stroke="#a0a0a0"/><path d="M1220.5 860.5 L1220.5 863.0" stroke="#a0a0a0"/><path d="M1227.5 860.5 L1227.5 866.0" stroke="#a0a0a0"/><text x="1226.5" y="880.5" text-anchor="middle" fill="#666">18时</text><path d="M1234.5 860.5 L1234.5 863.0" stroke="#a0a0a0"/><path d="M1241.5 860.5 L1241.5 863.0" stroke="#a0a0a0"/><path d="M1248.5 860.5 L1248.5 863.0" stroke="#a0a0a0"/><path d="M1255.5 860.5 L1255.5 863.0" stroke="#a0a0a0"/><path d="M1262.5 860.5 L1262.5 866.0" stroke="#a0a0a0"/><text x="1261.5" y="880.5" text-anchor="middle" fill="#666">20时</text><path d="M1270.5 860.5 L1270.5 863.0" stroke="#a0a0a0"/><path d="M1277.5 860.5 L1277.5 863.0" stroke="#a0a0a0"/><path d="M1284.5 860.5 L1284.5 863.0" stroke="#a0a0a0"/><path d="M1291.5 860.5 L1291.5 863.0" stroke="#a0a0a0"/><path d="M1298.5 860.5 L1298.5 866.0" stroke="#a0a0a0"/><text x="1297.5" y="880.5" text-anchor="middle" fill="#666">22时</text><path d="M1305.5 860.5 L1305.5 863.0" stroke="#a0a0a0"/><path d="M1312.5 860.5 L1312.5 863.0" stroke="#a0a0a0"/><path d="M1319.5 860.5 L1319.5 863.0" stroke="#a0a0a0"/><path d="M1327.5 860.5 L1327.5 863.0" stroke="#a0a0a0"/><path d="M1334.5 860.5 L1334.5 866.0" stroke="#a0a0a0"/><text x="1333.5" y="880.5" text-anchor="middle" fill="#666">00时</text><path d="M1341.5 860.5 L1341.5 863.0" stroke="#a0a0a0"/><path d="M1348.5 860.5 L1348.5 863.0" stroke="#a0a0a0"/><path d="M1355.5 860.5 L1355.5 863.0" stroke="#a0a0a0"/><path d="M1362.5 860.5 L1362.5 863.0" stroke="#a0a0a0"/><path d="M1369.5 860.5 L1369.5 866.0" stroke="#a0a0a0"/><text x="1368.5" y="880.5" text-anchor="middle" fill="#666">02时</text><path d="M1376.5 860.5 L1376.5 863.0" stroke="#a0a0a0"/><path d="M1384.5 860.5 L1384.5 863.0" stroke="#a0a0a0"/><path d="M1391.5 860.5 L1391.5 863.0" stroke="#a0a0a0"/><path d="M1398.5 860.5 L1398.5 863.0" stroke="#a0a0a0"/><path d="M1405.5 860.5 L1405.5 866.0" stroke="#a0a0a0"/><text x="1404.5" y="880.5" text-anchor="middle" fill="#666">04时</text><path d="M1412.5 860.5 L1412.5 863.0" stroke="#a0a0a0"/><path d="M1419.5 860.5 L1419.5 863.0" stroke="#a0a0a0"/><path d="M1426.5 860.5 L1426.5 863.0" stroke="#a0a0a0"/><path d="M1433.5 860.5 L1433.5 863.0" stroke="#a0a0a0"/><path d="M1441.5 860.5 L1441.5 866.0" stroke="#a0a0a0"/><text x="1440.5" y="880.5" text-anchor="middle" fill="#666">06时</text><path d="M1448.5 860.5 L1448.5 863.0" stroke="#a0a0a0"/><path d="M1455.5 860.5 L1455.5 863.0" stroke="#a0a0a0"/><path d="M1462.5 860.5 L1462.5 863.0" stroke="#a0a0a0"/><path d="M1469.5 860.5 L1469.5 863.0" stroke="#a0a0a0"/><path d="M1476.5 860.5 L1476.5 866.0" stroke="#a0a0a0"/><text x="1475.5" y="880.5" text-anchor="middle" fill="#666">08时</text><path d="M1483.5 860.5 L1483.5 863.0" stroke="#a0a0a0"/><path d="M1490.5 860.5 L1490.5 863.0" stroke="#a0a0a0"/><path d="M1498.5 860.5 L1498.5 863.0" stroke="#a0a0a0"/><path d="M1505.5 860.5 L1505.5 863.0" stroke="#a0a0a0"/><path d="M1512.5 860.5 L1512.5 866.0" stroke="#a0a0a0"/><text x="1511.5" y="880.5" text-anchor="middle" fill="#666">10时</text><path d="M1519.5 860.5 L1519.5 863.0" stroke="#a0a0a0"/><path d="M1526.5 860.5 L1526.5 863.0" stroke="#a0a0a0"/><path d="M1533.5 860.5 L1533.5 863.0" stroke="#a0a0a0"/><path d="M1540.5 860.5 L1540.5 863.0" stroke="#a0a0a0"/><path d="M1547.5 860.5 L1547.5 866.0" stroke="#a0a0a0"/><text x="1546.5" y="880.5" text-anchor="middle" fill="#666">12时</text><path d="M1555.5 860.5 L1555.5 863.0" stroke="#a0a0a0"/><path d="M1562.5 860.5 L1562.5 863.0" stroke="#a0a0a0"/><path d="M1569.5 860.5 L1569.5 863.0" stroke="#a0a0a0"/><path d="M1576.5 860.5 L1576.5 863.0" stroke="#a0a0a0"/><rect x="1079.45" y="631.5" width="10.7" height="229.0" fill="#4682b4" stroke="#3a70a2"/><rect x="1097.27" y="631.5" width="10.7" height="229.0" fill="#4682b4" stroke="#3a70a2"/><rect x="1115.08" y="631.5" width="10.7" height="229.0" fill="#4682b4" stroke="#3a70a2"/><rect x="1132.89" y="631.5" width="10.7" height="229.0" fill="#4682b4" stroke="#3a70a2"/><rect x="1150.71" y="631.5" width="10.7" height="229.0" fill="#4682b4" stroke="#3a70a2"/><rect x="1168.53" y="631.5" width="10.7" height="229.0" fill="#4682b4" stroke="#3a70a2"/><rect x="1186.34" y="631.5" width="10.7" height="229.0" fill="#4682b4" stroke="#3a70a2"/><rect x="1204.16" y="631.5" width="10.7" height="229.0" fill="#4682b4" stroke="#3a70a2"/><rect x="1221.97" y="631.5" width="10.7" height="229.0" fill="#4682b4" stroke="#3a70a2"/><rect x="1239.79" y="631.5" width="10.7" height="229.0" fill="#4682b4" stroke="#3a70a2"/><rect x="1257.60" y="631.5" width="10.7" height="229.0" fill="#4682b4" stroke="#3a70a2"/><rect x="1275.41" y="631.5" width="10.7" height="229.0" fill="#4682b4" stroke="#3a70a2"/><rect x="1293.23" y="631.5" width="10.7" height="229.0" fill="#4682b4" stroke="#3a70a2"/><rect x="1311.05" y="631.5" width="10.7" height="229.0" fill="#4682b4" stroke="#3a70a2"/><rect x="1328.86" y="631.5" width="10.7" height="229.0" fill="#4682b4" stroke="#3a70a2"/><rect x="1346.68" y="631.5" width="10.7" height="229.0" fill="#4682b4" stroke="#3a70a2"/><rect x="1364.49" y="631.5" width="10.7" height="229.0" fill="#4682b4" stroke="#3a70a2"/><rect x="1382.31" y="631.5" width="10.7" height="229.0" fill="#4682b4" stroke="#3a70a2"/><rect x="1400.12" y="631.5" width="10.7" height="229.0" fill="#4682b4" stroke="#3a70a2"/><rect x="1417.94" y="631.5" width="10.7" height="229.0" fill="#4682b4" stroke="#3a70a2"/><rect x="1435.75" y="631.5" width="10.7" height="229.0" fill="#4682b4" stroke="#3a70a2"/><rect x="1453.57" y="631.5" width="10.7" height="229.0" fill="#4682b4" stroke="#3a70a2"/><rect x="1471.38" y="631.5" width="10.7" height="229.0" fill="#4682b4" stroke="#3a70a2"/><rect x="1489.20" y="631.5" width="10.7" height="229.0" fill="#4682b4" stroke="#3a70a2"/><rect x="1507.01" y="631.5" width="10.7" height="229.0" fill="#4682b4" stroke="#3a70a2"/><rect x="1524.83" y="631.5" width="10.7" height="229.0" fill="#4682b4" stroke="#3a70a2"/><path d="M1084.5 631.5 L1084.5 621.5" stroke="#386fa0"/><rect x="1074.5" y="606.5" width="20" height="15" fill="#fff" stroke="#386fa0"/><text x="1084.5" y="618.0" text-anchor="middle" fill="#386fa0">0.1</text><path d="M1120.5 631.5 L1120.5 621.5" stroke="#386fa0"/><rect x="1110.5" y="606.5" width="20" height="15" fill="#fff" stroke="#386fa0"/><text x="1120.5" y="618.0" text-anchor="middle" fill="#386fa0">0.1</text><path d="M1156.5 631.5 L1156.5 621.5" stroke="#386fa0"/><rect x="1146.5" y="606.5" width="20" height="15" fill="#fff" stroke="#386fa0"/><text x="1156.5" y="618.0" text-anchor="middle" fill="#386fa0">0.1</text><path d="M1191.5 631.5 L1191.5 621.5" stroke="#386fa0"/><rect x="1181.5" y="606.5" width="20" height="15" fill="#fff" stroke="#386fa0"/><text x="1191.5" y="618.0" text-anchor="middle" fill="#386fa0">0.1</text><path d="M1227.5 631.5 L1227.5 621.5" stroke="#386fa0"/><rect x="1217.5" y="606.5" width="20" height="15" fill="#fff" stroke="#386fa0"/><text x="1227.5" y="618.0" text-anchor="middle" fill="#386fa0">0.1</text><path d="M1262.5 631.5 L1262.5 621.5" stroke="#386fa0"/><rect x="1252.5" y="606.5" width="20" height="15" fill="#fff" stroke="#386fa0"/><text x="1262.5" y="618.0" text-anchor="middle" fill="#386fa0">0.1</text><path d="M1298.5 631.5 L1298.5 621.5" stroke="#386fa0"/><rect x="1288.5" y="606.5" width="20" height="15" fill="#fff" stroke="#386fa0"/><text x="1298.5" y="618.0" text-anchor="middle" fill="#386fa0">0.1</text><path d="M1352.5 631.5 L1352.5 621.5" stroke="#386fa0"/><rect x="1342.5" y="606.5" width="20" height="15" fill="#fff" stroke="#386fa0"/><text x="1352.5" y="618.0" text-anchor="middle" fill="#386fa0">0.1</text><path d="M1387.5 631.5 L1387.5 621.5" stroke="#386fa0"/><rect x="1377.5" y="606.5" width="20" height="15" fill="#fff" stroke="#386fa0"/><text x="1387.5" y="618.0" text-anchor="middle" fill="#386fa0">0.1</text><path d="M1423.5 631.5 L1423.5 621.5" stroke="#386fa0"/><rect x="1413.5" y="606.5" width="20" height="15" fill="#fff" stroke="#386fa0"/><text x="1423.5" y="618.0" text-anchor="middle" fill="#386fa0">0.1</text><path d="M1458.5 631.5 L1458.5 621.5" stroke="#386fa0"/><rect x="1448.5" y="606.5" width="20" height="15" fill="#fff" stroke="#386fa0"/><text x="1458.5" y="618.0" text-anchor="middle" fill="#386fa0">0.1</text><path d="M1494.5 631.5 L1494.5 621.5" stroke="#386fa0"/><rect x="1484.5" y="606.5" width="20" height="15" fill="#fff" stroke="#386fa0"/><text x="1494.5" y="618.0" text-anchor="middle" fill="#386fa0">0.1</text><path d="M1530.5 631.5 L1530.5 621.5" stroke="#386fa0"/><rect x="1520.5" y="606.5" width="20" height="15" fill="#fff" stroke="#386fa0"/><text x="1530.5" y="618.0" text-anchor="middle" fill="#386fa0">0.1</text></svg>
</body></html>
